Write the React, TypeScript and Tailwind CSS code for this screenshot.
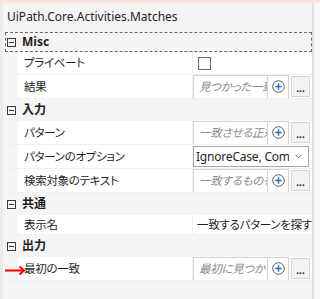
import React from "react";

const FONT = "font-['Noto_Sans','Noto_Sans_CJK_JP',sans-serif] [font-feature-settings:'palt']";
const JP = "text-[11.5px] tracking-[-0.3px]";

function Minus() {
  return (
    <div className="w-[9px] h-[9px] border border-[#3c3c3c] flex items-center justify-center shrink-0">
      <div className="w-[5px] h-[1px] bg-[#3c3c3c]" />
    </div>
  );
}

function Category({ label, h, focused, jp = true }: { label: string; h: string; focused?: boolean; jp?: boolean }) {
  return (
    <div className={`relative flex items-center ${h}`}>
      <div className="ml-[2px]">
        <Minus />
      </div>
      <span className={`ml-[6px] font-bold ${jp ? "text-[12px]" : "text-[12px]"} text-[#1e1e1e] leading-none`}>{label}</span>
      {focused && (
        <div className="absolute inset-0 border border-dashed border-[#6a6a6a] pointer-events-none" />
      )}
    </div>
  );
}

function Row({ label, h, children }: { label: string; h: string; children?: React.ReactNode }) {
  return (
    <div className={`flex ${h} border-b border-[#f0f0f0]`}>
      <div className="w-[13px] shrink-0" />
      <div className={`w-[175px] shrink-0 bg-white flex items-center pl-[6px] ${JP} text-[#1e1e1e] border-r border-[#f0f0f0] whitespace-nowrap overflow-hidden`}>
        {label}
      </div>
      <div className="flex-1 bg-white flex items-center overflow-hidden">{children}</div>
    </div>
  );
}

function PlusIcon() {
  return (
    <svg width="13" height="13" viewBox="0 0 13 13">
      <circle cx="6.5" cy="6.5" r="5.8" fill="none" stroke="#5a5a5a" strokeWidth="1" />
      <path d="M6.5 3.3v6.4M3.3 6.5h6.4" stroke="#1473e6" strokeWidth="1.4" />
    </svg>
  );
}

function Editor({ placeholder }: { placeholder: string }) {
  return (
    <div className="flex items-center">
      <div className="w-[96px] h-[24px] border border-[#cdd5df] flex bg-white">
        <div className={`w-[74px] overflow-hidden whitespace-nowrap flex items-center pl-[5px] ${JP} italic text-[#8c8c8c]`}>
          <span className="block w-[68px] overflow-hidden">{placeholder}</span>
        </div>
        <div className="w-[21px] border-l border-[#cdd5df] flex items-center justify-center shrink-0">
          <PlusIcon />
        </div>
      </div>
      <div className="ml-[2px] w-[19px] h-[21px] border border-[#cdd5df] bg-[#f3f3f3] flex items-end justify-center pb-[3px] text-[10px] leading-none text-[#1e1e1e] font-bold">
        ...
      </div>
    </div>
  );
}

export default function App() {
  return (
    <div className={`w-[320px] h-[299px] bg-[#f5f5f5] flex flex-col overflow-hidden relative ${FONT}`}>
      <div className="h-[3px] bg-[#fbe6e6] shrink-0" />
      <div className="flex flex-1">
        <div className="w-[3px] bg-[#ececec] shrink-0" />
        <div className="w-[2px] shrink-0" />
        <div className="w-[307px] flex flex-col">
          <div className="h-[29px] flex items-center pl-[2px] pb-[1px] text-[12px] text-[#1e1e1e] whitespace-nowrap">
            UiPath.Core.Activities.Matches
          </div>
          <Category label="Misc" h="h-[20px]" focused jp={false} />
          <Row label="プライベート" h="h-[23px]">
            <div className="ml-[5px] w-[13px] h-[13px] border border-[#666666] bg-white" />
          </Row>
          <Row label="結果" h="h-[24px]">
            <Editor placeholder="見つかった一致" />
          </Row>
          <Category label="入力" h="h-[22px]" />
          <Row label="パターン" h="h-[24px]">
            <Editor placeholder="一致させる正規表現" />
          </Row>
          <Row label="パターンのオプション" h="h-[24px]">
            <div className="w-[116px] h-[21px] border border-[#a8a8a8] flex items-center bg-white">
              <div className="w-[95px] overflow-hidden whitespace-nowrap pl-[2px] text-[12px] tracking-[-0.2px] text-[#1e1e1e]">
                IgnoreCase, Compiled
              </div>
              <div className="flex-1 flex items-center justify-center">
                <svg width="7" height="5" viewBox="0 0 7 5">
                  <path d="M0.5 0.8L3.5 3.8L6.5 0.8" fill="none" stroke="#606060" strokeWidth="1" />
                </svg>
              </div>
            </div>
          </Row>
          <Row label="検索対象のテキスト" h="h-[24px]">
            <Editor placeholder="一致するものを検索するテキスト" />
          </Row>
          <Category label="共通" h="h-[22px]" />
          <Row label="表示名" h="h-[20px]">
            <span className={`pl-[4px] ${JP} text-[#1e1e1e] whitespace-nowrap`}>一致するパターンを探す</span>
          </Row>
          <Category label="出力" h="h-[22px]" />
          <Row label="最初の一致" h="h-[24px]">
            <Editor placeholder="最初に見つかった一致" />
          </Row>
        </div>
        <div className="w-[2px] bg-[#e0e0e0] shrink-0" />
        <div className="flex-1 bg-[#f9f9f9]" />
      </div>
      <svg className="absolute left-[4px] top-[265px]" width="22" height="11" viewBox="0 0 22 11">
        <path d="M1 5.5H20" stroke="#ff0000" strokeWidth="2" />
        <path d="M15.5 1.5L20 5.5L15.5 9.5" fill="none" stroke="#ff0000" strokeWidth="2" />
      </svg>
    </div>
  );
}
